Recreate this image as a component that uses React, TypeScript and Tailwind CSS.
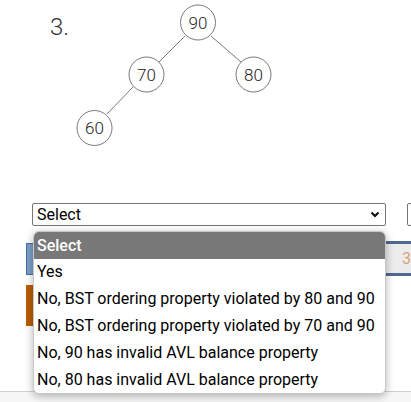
const nodes = [
  { v: "90", x: 198, y: 22.5 },
  { v: "70", x: 146.5, y: 74.5 },
  { v: "80", x: 253.5, y: 74.5 },
  { v: "60", x: 94.5, y: 128 },
];

const edges = [
  [185, 36, 159, 62],
  [211, 36, 241, 62],
  [133, 87, 107, 114],
];

const options = [
  "Select",
  "Yes",
  "No, BST ordering property violated by 80 and 90",
  "No, BST ordering property violated by 70 and 90",
  "No, 90 has invalid AVL balance property",
  "No, 80 has invalid AVL balance property",
];

const Tree = () => (
  <svg width="230" height="203" viewBox="70 0 230 203" className="shrink-0">
    {edges.map(([x1, y1, x2, y2], i) => (
      <line key={i} x1={x1} y1={y1} x2={x2} y2={y2} stroke="#7a7a7a" strokeWidth="1" />
    ))}
    {nodes.map((n) => (
      <g key={n.v}>
        <circle cx={n.x} cy={n.y} r="17.5" fill="white" stroke="#7a7a7a" strokeWidth="1" />
        <text
          x={n.x}
          y={n.y + 6}
          textAnchor="middle"
          fontSize="17"
          fontWeight="300"
          fill="#222"
          fontFamily="Roboto, sans-serif"
        >
          {n.v}
        </text>
      </g>
    ))}
  </svg>
);

export default function App() {
  return (
    <div className="relative w-[411px] h-[402px] overflow-hidden bg-white font-['Roboto',sans-serif] flex flex-col">
      <div className="flex h-[203px] shrink-0">
        <span className="w-[70px] shrink-0 pl-[50px] pt-[12px] text-[24px] leading-[30px] font-light text-[#333]">
          3.
        </span>
        <Tree />
      </div>

      <div className="flex gap-[21px] pl-[32px] shrink-0">
        <div className="w-[354px] h-[23px] shrink-0 flex items-center justify-between border border-[#767676] rounded-[2px] bg-white pl-[4px] pr-[5px] text-[16px] text-black">
          <span>Select</span>
          <svg width="10" height="7" viewBox="0 0 10 7">
            <path d="M1.5 1.5 L5 5 L8.5 1.5" fill="none" stroke="#111" strokeWidth="2.2" />
          </svg>
        </div>
        <div className="w-[120px] h-[23px] shrink-0 border border-[#767676] rounded-[2px] bg-white" />
      </div>

      <div className="flex pl-[26px] mt-[15px] h-[35px] shrink-0">
        <div className="w-[360px] mt-[2px] h-[32px] bg-[#7c9ec8] border border-[#4d6d9c]" />
        <div className="flex-1 flex items-center pl-[18px] bg-[#ececec] border-y-[3px] border-[#506892] text-[16px] text-[#d9a27a]">
          3
        </div>
      </div>

      <div className="ml-[26px] mt-[9px] w-[120px] h-[41px] bg-[#bb5d00] shrink-0" />

      <div className="mt-[65px] border-t border-[#cfcfcf] flex-1 bg-[#f6f6f6]" />

      <div className="absolute left-[33px] top-[231px] w-[353px] rounded-[6px] bg-white overflow-hidden border border-[#c8c8c8] shadow-[0_2px_8px_rgba(0,0,0,0.3)]">
        {options.map((o, i) => (
          <div
            key={o}
            className={
              i === 0
                ? "h-[27px] flex items-center pl-[3px] text-[16px] font-medium bg-[#787878] text-white"
                : "h-[26.8px] flex items-center pl-[3px] text-[16px] text-black"
            }
          >
            {o}
          </div>
        ))}
      </div>
    </div>
  );
}
